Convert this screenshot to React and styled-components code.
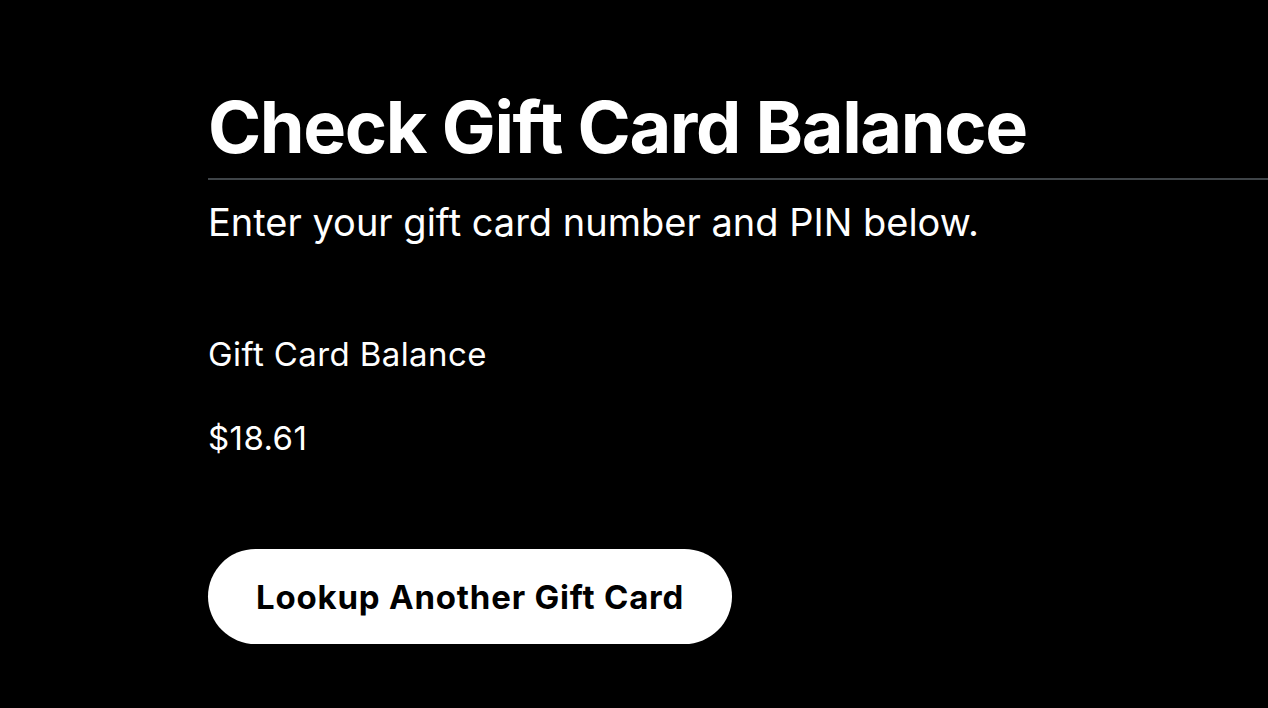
import React from 'react';
import styled, { createGlobalStyle } from 'styled-components';

const GlobalStyle = createGlobalStyle`
  html, body {
    margin: 0;
    padding: 0;
    background: #000;
    color: #fff;
    font-family: Inter, "Noto Sans", sans-serif;
  }
`;

const Page = styled.main`
  min-height: 708px;
  padding: 88px 0 0 208px;
  box-sizing: border-box;
  overflow: hidden;
`;

const Title = styled.h1`
  margin: 0;
  padding-bottom: 12px;
  font-size: 72px;
  line-height: 78px;
  font-weight: 700;
  letter-spacing: -1.4px;
  border-bottom: 2px solid #3f4448;
`;

const Subtitle = styled.p`
  margin: 18px 0 0;
  font-size: 38px;
  line-height: 48px;
`;

const Label = styled.p`
  margin: ${({ $top }) => $top}px 0 0;
  font-size: 33px;
  line-height: 40px;
  letter-spacing: 0.4px;
`;

const Button = styled.button`
  margin-top: 91px;
  height: 95px;
  padding: 0 48px;
  border: none;
  border-radius: 48px;
  background: #fff;
  color: #000;
  font-family: inherit;
  font-size: 33px;
  font-weight: 700;
  letter-spacing: 0.8px;
  cursor: pointer;
`;

export default function App() {
  return (
    <>
      <GlobalStyle />
      <Page>
        <Title>Check Gift Card Balance</Title>
        <Subtitle>Enter your gift card number and PIN below.</Subtitle>
        <Label $top={88}>Gift Card Balance</Label>
        <Label $top={44}>$18.61</Label>
        <Button>Lookup Another Gift Card</Button>
      </Page>
    </>
  );
}
